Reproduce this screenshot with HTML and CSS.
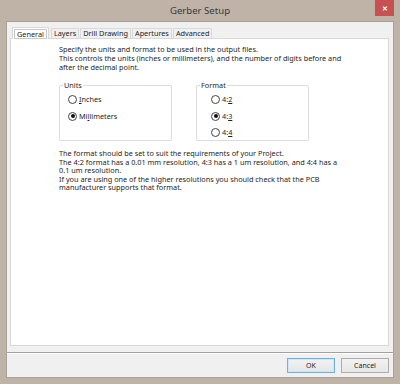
FILE: index.html
```html
<!DOCTYPE html>
<html lang="en">
<head>
  <meta charset="UTF-8">
  <title>Gerber Setup</title>
  <link rel="stylesheet" href="styles.css">
</head>
<body>
  <div class="window">
    <div class="titlebar">
      <span class="title">Gerber Setup</span>
      <span class="close">&#x2715;</span>
    </div>
    <div class="client">
      <div class="tabs">
        <span class="tab active"><span class="focus">General</span></span>
        <span class="tab">Layers</span>
        <span class="tab">Drill Drawing</span>
        <span class="tab">Apertures</span>
        <span class="tab">Advanced</span>
      </div>
      <div class="panel">
        <p>Specify the units and format to be used in the output files.<br>
        This controls the units (inches or millimeters), and the number of digits before and<br>
        after the decimal point.</p>
        <div class="groups">
          <fieldset class="group">
            <legend>Units</legend>
            <label class="radio"><span class="dot"></span><span><u>I</u>nches</span></label>
            <label class="radio"><span class="dot on"></span><span>Mi<u>l</u>limeters</span></label>
          </fieldset>
          <fieldset class="group format">
            <legend>Format</legend>
            <label class="radio"><span class="dot"></span><span>4:<u>2</u></span></label>
            <label class="radio"><span class="dot on"></span><span>4:<u>3</u></span></label>
            <label class="radio"><span class="dot"></span><span>4:<u>4</u></span></label>
          </fieldset>
        </div>
        <p class="notes">The format should be set to suit the requirements of your Project.<br>
        The 4:2 format has a 0.01 mm resolution, 4:3 has a 1 um resolution, and 4:4 has a<br>
        0.1 um resolution.<br>
        If you are using one of the higher resolutions you should check that the PCB<br>
        manufacturer supports that format.</p>
      </div>
      <div class="footer">
        <button class="btn default">OK</button>
        <button class="btn">Cancel</button>
      </div>
    </div>
  </div>
</body>
</html>
```
FILE: styles.css
```css
*{
  margin: 0;
  padding: 0;
  box-sizing: border-box;
}
body{
  font-family: "Noto Sans", "Open Sans", sans-serif;
  font-size: 7.3px;
  color: #1e1e1e;
}
.window{
  width: 400px;
  height: 384px;
  background: #bfb3a8;
  padding: 0 6px 6px 6px;
  display: flex;
  flex-direction: column;
}
.titlebar{
  height: 21px;
  position: relative;
  display: flex;
  align-items: center;
  justify-content: center;
}
.title{
  font-size: 9.6px;
  color: #3a3a3a;
}
.close{
  position: absolute;
  right: 0;
  top: 0;
  width: 19px;
  height: 16px;
  background: #c75050;
  color: #fff;
  font-size: 7px;
  font-weight: bold;
  display: flex;
  align-items: center;
  justify-content: center;
}
.client{
  flex: 1;
  background: #f0f0f0;
  border: 1px solid #aca197;
  display: flex;
  flex-direction: column;
  padding: 5px 4px 0 3px;
}
.tabs{
  display: flex;
  padding-left: 2px;
  height: 11px;
  align-items: flex-end;
  position: relative;
  z-index: 1;
}
.tab{
  height: 10px;
  line-height: 9px;
  padding: 0 2px;
  border: 1px solid #d9d9d9;
  border-bottom: none;
  background: #f0f0f0;
  margin-right: 1px;
}
.tab.active{
  height: 12px;
  background: #fff;
  padding: 1px 1px 0;
  margin-right: 2px;
  margin-bottom: -1px;
}
.focus{
  display: block;
  border: 1px solid #c8c8c8;
  line-height: 8px;
  padding: 0 2px;
}
.panel{
  height: 308px;
  background: #fff;
  border: 1px solid #d9d9d9;
  padding: 6px 0 0 48px;
  line-height: 9px;
}
.notes{
  line-height: 8.5px;
}
.groups{
  display: flex;
  gap: 24px;
  margin: 9px 0 8px;
}
.group{
  width: 113px;
  height: 60px;
  border: 1px solid #dcdcdc;
  border-radius: 2px;
  padding: 5px 0 0 8px;
  display: flex;
  flex-direction: column;
  gap: 7.5px;
}
.group.format{
  padding-left: 14px;
}
.group legend{
  margin-left: -5px;
  padding: 0 1px;
}
.group:first-child legend{
  margin-left: -5px;
}
.group.format legend{
  margin-left: -11px;
}
.radio{
  display: flex;
  align-items: center;
  gap: 2px;
  height: 9px;
}
.dot{
  width: 9px;
  height: 9px;
  border: 1px solid #444;
  border-radius: 50%;
  background: #fff;
  display: flex;
  align-items: center;
  justify-content: center;
}
.dot.on::after{
  content: "";
  width: 4px;
  height: 4px;
  border-radius: 50%;
  background: #111;
}
.footer{
  flex: 1;
  margin: 6px -4px 0 -3px;
  border-top: 1px solid #a0a0a0;
  box-shadow: inset 0 1px 0 #fff;
  display: flex;
  justify-content: flex-end;
  align-items: flex-start;
  padding: 5px 4px 0 0;
  gap: 6px;
}
.btn{
  width: 48px;
  height: 15px;
  font-family: inherit;
  font-size: 7px;
  background: linear-gradient(#f2f2f2, #e6e6e6);
  border: 1px solid #acacac;
  color: #1e1e1e;
}
.btn.default{
  border-color: #6cb0e8;
  box-shadow: inset 0 0 0 1px #cfe6f8;
}
```
